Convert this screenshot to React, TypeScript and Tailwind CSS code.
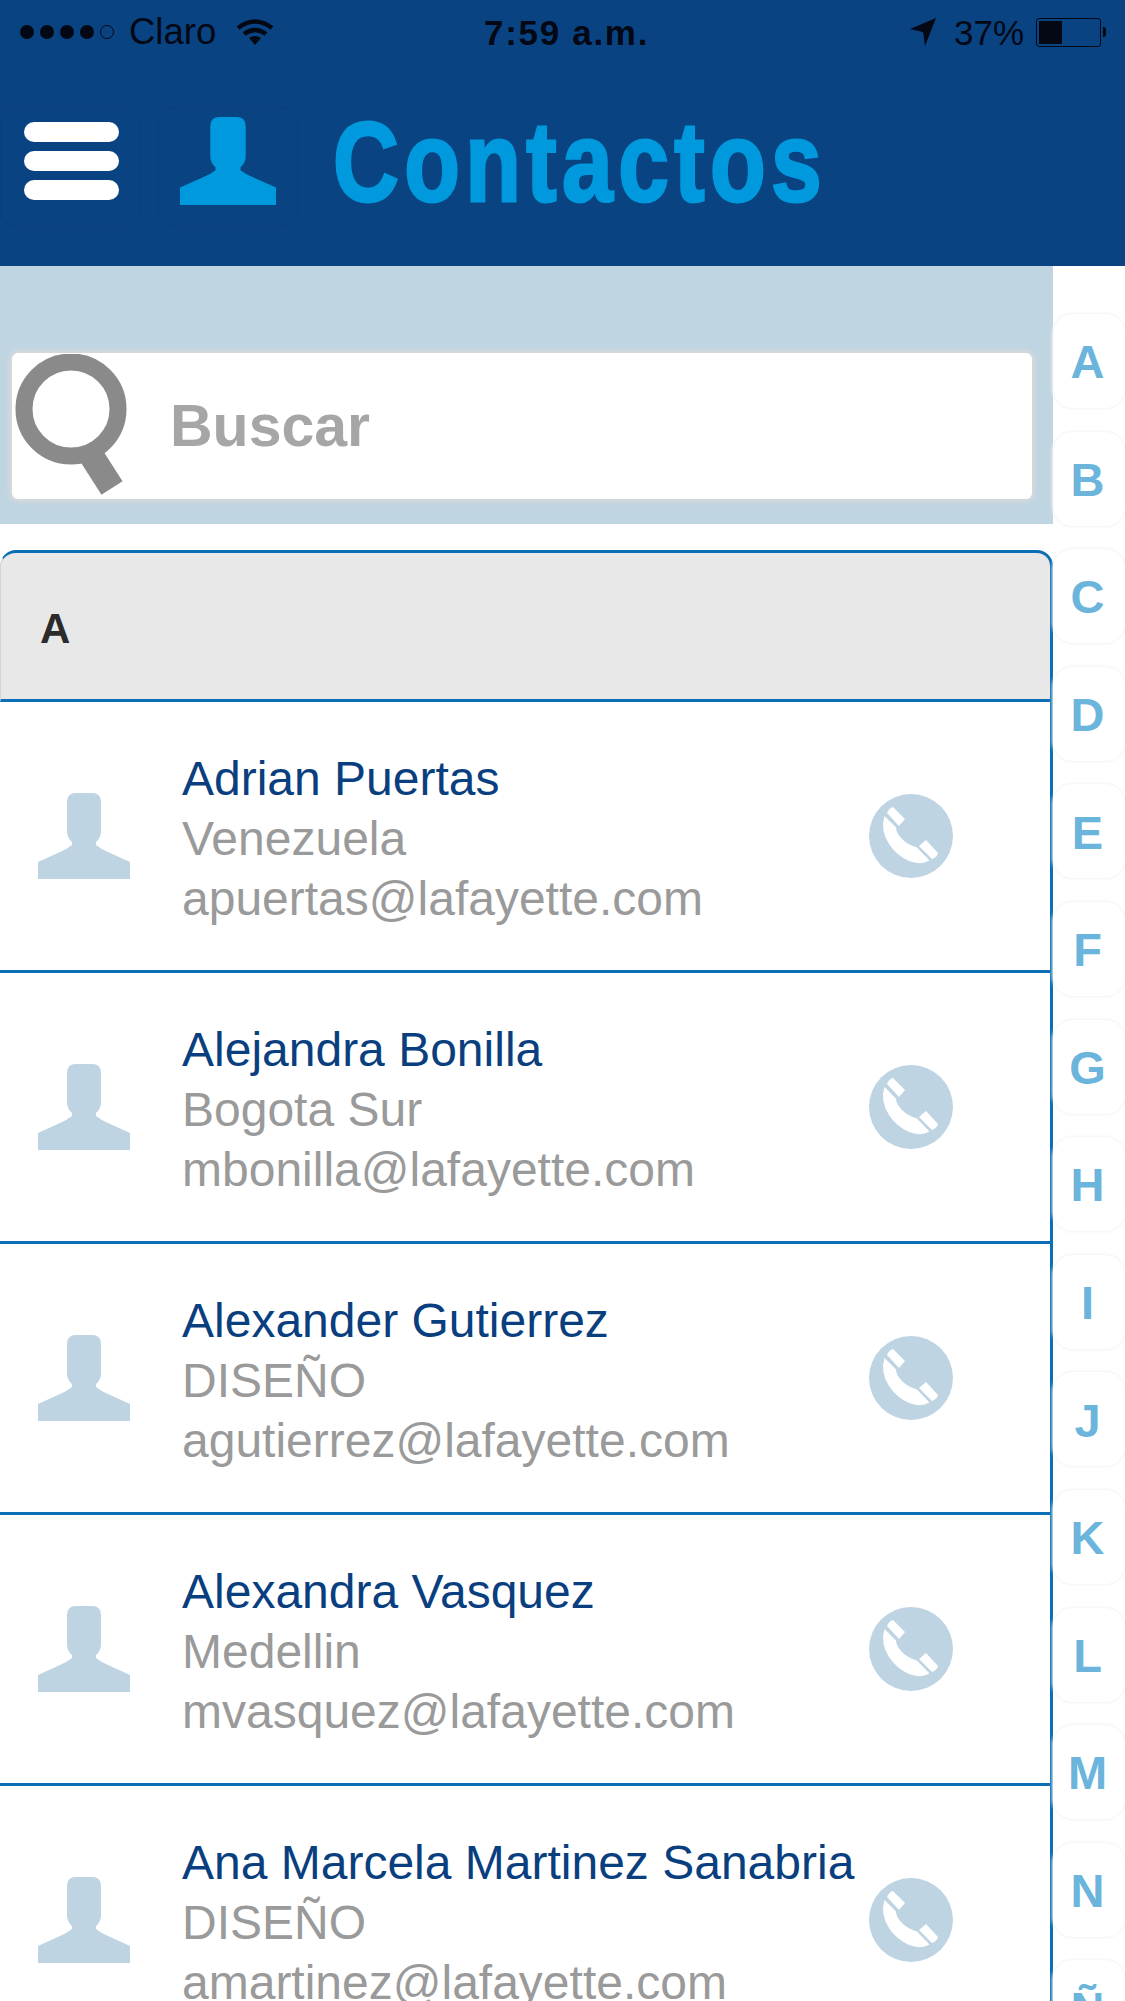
const contacts = [
  { name: 'Adrian Puertas', place: 'Venezuela', email: 'apuertas@lafayette.com' },
  { name: 'Alejandra Bonilla', place: 'Bogota Sur', email: 'mbonilla@lafayette.com' },
  { name: 'Alexander Gutierrez', place: 'DISEÑO', email: 'agutierrez@lafayette.com' },
  { name: 'Alexandra Vasquez', place: 'Medellin', email: 'mvasquez@lafayette.com' },
  { name: 'Ana Marcela Martinez Sanabria', place: 'DISEÑO', email: 'amartinez@lafayette.com' },
];

const letters = ['A', 'B', 'C', 'D', 'E', 'F', 'G', 'H', 'I', 'J', 'K', 'L', 'M', 'N', 'Ñ'];

const PersonIcon = ({ className }: { className: string }) => (
  <svg viewBox="0 0 92 86" preserveAspectRatio="none" className={className} fill="currentColor">
    <path d="M38 0h16q9 0 9 9v29q0 7-5 11v3q5 4 12 7l22 10v17H0V69l22-10q7-3 12-7v-3q-5-4-5-11V9q0-9 9-9z" />
  </svg>
);

const PhoneIcon = () => (
  <svg viewBox="0 0 84 84" className="w-[84px] h-[84px] shrink-0">
    <circle cx="42" cy="42" r="42" fill="#bed4e3" />
    <path d="M24 13l12 12-6 7-12-13q2-5 6-6zM57 46l12 13q-1 4-6 6L50 52z" fill="#fff" />
    <path d="M15.500 22L27 33.500q0 5.500 6 11.500t15 8.500L60.500 66.500q-9 5-20.500 .5-13-6-20-17-9-14-4.500-28z" fill="#fff" />
  </svg>
);

const StatusBar = () => (
  <div className="flex items-center h-[64px] pl-[20px] text-[35px] leading-none text-[#030814]">
    <div className="flex items-center w-[464px]">
      <div className="flex gap-[6px]">
        <span className="w-[14px] h-[14px] rounded-full bg-[#030814]" />
        <span className="w-[14px] h-[14px] rounded-full bg-[#030814]" />
        <span className="w-[14px] h-[14px] rounded-full bg-[#030814]" />
        <span className="w-[14px] h-[14px] rounded-full bg-[#030814]" />
        <span className="w-[14px] h-[14px] rounded-full border border-[#030814]" />
      </div>
      <span className="ml-[15px] text-[36.500px]">Claro</span>
      <svg viewBox="0 0 38 27" className="ml-[20px] w-[38px] h-[27px]" fill="none" stroke="#030814" strokeWidth="4.500">
        <path d="M2 9q17-13 34 0" />
        <path d="M8 15q11-8 22 0" />
        <path d="M19 26l-6-7q6-4 12 0z" fill="#030814" stroke="none" />
      </svg>
    </div>
    <span className="w-[426px] font-bold tracking-[1.700px]">7:59 a.m.</span>
    <div className="flex items-center">
      <svg viewBox="0 0 26 28" className="w-[26px] h-[28px]" fill="#030814">
        <path d="M26 0L15 28l-2-14L0 11z" />
      </svg>
      <span className="ml-[18px]">37%</span>
      <div className="ml-[12px] flex items-center">
        <div className="w-[65px] h-[29px] rounded-[3px] border border-[#030814] p-[2px]">
          <div className="w-[23px] h-full bg-[#030814]" />
        </div>
        <div className="ml-[2px] w-[3px] h-[10px] rounded-r-full bg-[#030814]" />
      </div>
    </div>
  </div>
);

const Header = () => (
  <header className="h-[266px] bg-[#0a4381]">
    <StatusBar />
    <div className="flex items-start mt-[43px]">
      <div className="w-[140px] h-[120px] rounded-2xl border border-[#0a3f7a] flex flex-col justify-center gap-[9px] pl-[23px] pb-[13px]">
        <span className="w-[95px] h-[20px] rounded-[10px] bg-white" />
        <span className="w-[95px] h-[20px] rounded-[10px] bg-white" />
        <span className="w-[95px] h-[20px] rounded-[10px] bg-white" />
      </div>
      <div className="ml-[18px] w-[140px] h-[120px] rounded-2xl border border-[#0a3f7a] flex items-center justify-center pb-[12px]">
        <PersonIcon className="w-[96px] h-[88px] text-[#0099dd]" />
      </div>
      <h1 className="ml-[35px] -mt-[2px] text-[114px] leading-none font-bold tracking-[6.700px] origin-left scale-x-[0.8] [-webkit-text-stroke:3px_#0099dd] text-[#0099dd]">
        Contactos
      </h1>
    </div>
  </header>
);

const SearchPanel = () => (
  <div className="h-[258px] shrink-0 bg-[#bfd5e2] pt-[87px] pl-[12px] pr-[21px]">
    <div className="h-[146px] rounded-md bg-white shadow-[0_0_4px_3px_#d6d9db] flex items-center pl-[3px]">
      <svg viewBox="0 0 112 145" className="w-[112px] h-[145px] blur-[0.7px]" fill="none" stroke="#8a8a8a">
        <circle cx="56" cy="55" r="47" strokeWidth="17" />
        <path d="M74 98l23 36" strokeWidth="25" />
      </svg>
      <span className="ml-[43px] text-[59px] font-bold text-[#a6a6a6]">Buscar</span>
    </div>
  </div>
);

const ContactRow = ({ name, place, email }: { name: string; place: string; email: string }) => (
  <div className="h-[271px] shrink-0 flex items-center border-b-[3px] border-r-[3px] border-[#0a6fb5]">
    <PersonIcon className="ml-[38px] w-[92px] h-[86px] shrink-0 text-[#bed4e3]" />
    <div className="ml-[52px] pt-[5px] flex-1 min-w-0 whitespace-nowrap text-[48px] leading-[60px] text-[#9a9a9a]">
      <p className="text-[#0a3f7f]">{name}</p>
      <p>{place}</p>
      <p>{email}</p>
    </div>
    <div className="mr-[97px]">
      <PhoneIcon />
    </div>
  </div>
);

const AlphaIndex = () => (
  <div className="flex-1 pt-[48px] flex flex-col gap-[23.600px]">
    {letters.map((letter) => (
      <div
        key={letter}
        className="h-[94px] shrink-0 rounded-[20px] bg-white shadow-[0_0_3px_1px_#f3f3f3] flex items-center justify-center pt-[3px] pr-[3px] text-[47px] font-bold text-[#6bb5dc]"
      >
        {letter}
      </div>
    ))}
  </div>
);

export default function App() {
  return (
    <div className="w-[1125px] h-[2001px] overflow-hidden bg-white font-['Liberation_Sans',sans-serif]">
      <Header />
      <div className="flex h-[1735px] overflow-hidden">
        <main className="w-[1053px] shrink-0 flex flex-col">
          <SearchPanel />
          <div className="mt-[26px] h-[152px] shrink-0 rounded-t-2xl border-t-[3px] border-b-[3px] border-r-[3px] border-l border-t-[#0a6fb5] border-b-[#0a6fb5] border-r-[#0a6fb5] border-l-[#d5d5d5] bg-[#e8e8e8] flex items-center pl-[39px] pt-[4px] text-[42px] font-bold text-[#2b2b2b]">
            A
          </div>
          {contacts.map((contact) => (
            <ContactRow key={contact.email} {...contact} />
          ))}
        </main>
        <AlphaIndex />
      </div>
    </div>
  );
}
